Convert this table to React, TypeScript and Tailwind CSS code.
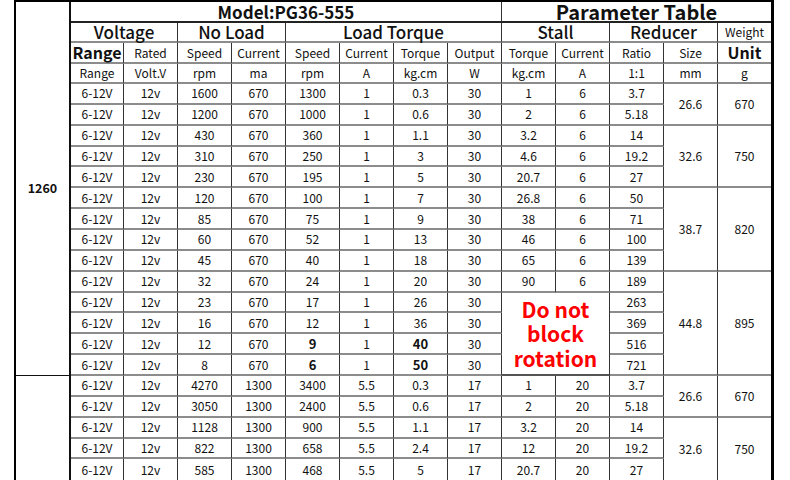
import React from "react";

type CellProps = {
  children?: React.ReactNode;
  className?: string;
  last?: boolean;
  noBottom?: boolean;
};

function Cell({ children, className = "", last = false, noBottom = false }: CellProps) {
  return (
    <div
      className={
        "flex items-center justify-center overflow-visible whitespace-nowrap border-r-[#333] border-b-[#8c8c8c] " +
        (last ? "border-r-0 " : "border-r ") +
        (noBottom ? "border-b-0 " : "border-b-2 ") +
        className
      }
    >
      {children}
    </div>
  );
}

const group1: string[][] = [
  ["1600", "670", "1300", "1", "0.3", "30", "1", "6", "3.7"],
  ["1200", "670", "1000", "1", "0.6", "30", "2", "6", "5.18"],
  ["430", "670", "360", "1", "1.1", "30", "3.2", "6", "14"],
  ["310", "670", "250", "1", "3", "30", "4.6", "6", "19.2"],
  ["230", "670", "195", "1", "5", "30", "20.7", "6", "27"],
  ["120", "670", "100", "1", "7", "30", "26.8", "6", "50"],
  ["85", "670", "75", "1", "9", "30", "38", "6", "71"],
  ["60", "670", "52", "1", "13", "30", "46", "6", "100"],
  ["45", "670", "40", "1", "18", "30", "65", "6", "139"],
  ["32", "670", "24", "1", "20", "30", "90", "6", "189"],
  ["23", "670", "17", "1", "26", "30", "", "", "263"],
  ["16", "670", "12", "1", "36", "30", "", "", "369"],
  ["12", "670", "9", "1", "40", "30", "", "", "516"],
  ["8", "670", "6", "1", "50", "30", "", "", "721"],
];

const group2: string[][] = [
  ["4270", "1300", "3400", "5.5", "0.3", "17", "1", "20", "3.7"],
  ["3050", "1300", "2400", "5.5", "0.6", "17", "2", "20", "5.18"],
  ["1128", "1300", "900", "5.5", "1.1", "17", "3.2", "20", "14"],
  ["822", "1300", "658", "5.5", "2.4", "17", "12", "20", "19.2"],
  ["585", "1300", "468", "5.5", "5", "17", "20.7", "20", "27"],
];

export default function App() {
  const cells: React.ReactNode[] = [];
  let k = 0;
  const key = () => "c" + k++;

  // Header row 1
  cells.push(
    <div
      key={key()}
      className="row-span-18 flex items-center justify-center border-r-2 border-b border-r-[#111] border-b-[#111] text-[12.5px] font-bold"
    >
      1260
    </div>
  );
  cells.push(
    <Cell key={key()} className="col-span-8 text-[17px] font-bold leading-[19px] border-b-[#222]">
      Model:PG36-555
    </Cell>
  );
  cells.push(
    <Cell key={key()} last className="col-span-5 text-[20px] font-bold leading-[19px] border-b-[#222]">
      Parameter Table
    </Cell>
  );

  // Header row 2
  cells.push(<Cell key={key()} className="col-span-2 text-[17px] font-medium leading-[18px]">Voltage</Cell>);
  cells.push(<Cell key={key()} className="col-span-2 text-[17px] font-medium leading-[18px]">No Load</Cell>);
  cells.push(<Cell key={key()} className="col-span-4 text-[17px] font-medium leading-[18px]">Load Torque</Cell>);
  cells.push(<Cell key={key()} className="col-span-2 text-[17px] font-medium leading-[18px]">Stall</Cell>);
  cells.push(<Cell key={key()} className="col-span-2 text-[17px] font-medium leading-[18px]">Reducer</Cell>);
  cells.push(<Cell key={key()} last className="text-[12px] leading-[18px]">Weight</Cell>);

  // Header row 3
  const h3 = ["Range", "Rated", "Speed", "Current", "Speed", "Current", "Torque", "Output", "Torque", "Current", "Ratio", "Size", "Unit"];
  h3.forEach((t, i) => {
    const big = i === 0 || i === h3.length - 1;
    cells.push(
      <Cell key={key()} last={i === h3.length - 1} className={big ? "text-[16px] font-bold leading-[19px]" : "text-[12px]"}>
        {t}
      </Cell>
    );
  });

  // Header row 4
  const h4 = ["Range", "Volt.V", "rpm", "ma", "rpm", "A", "kg.cm", "W", "kg.cm", "A", "1:1", "mm", "g"];
  h4.forEach((t, i) => {
    cells.push(
      <Cell key={key()} last={i === h4.length - 1} className="text-[12px]">
        {t}
      </Cell>
    );
  });

  // Group 1
  const g1Blocks: Record<number, { span: string; size: string; weight: string }> = {
    0: { span: "row-span-2", size: "26.6", weight: "670" },
    2: { span: "row-span-3", size: "32.6", weight: "750" },
    5: { span: "row-span-4", size: "38.7", weight: "820" },
    9: { span: "row-span-5", size: "44.8", weight: "895" },
  };
  group1.forEach((r, i) => {
    const boldLoad = i >= 12;
    cells.push(<Cell key={key()} className="text-[12px]">6-12V</Cell>);
    cells.push(<Cell key={key()} className="text-[12px]">12v</Cell>);
    cells.push(<Cell key={key()} className="text-[12px]">{r[0]}</Cell>);
    cells.push(<Cell key={key()} className="text-[12px]">{r[1]}</Cell>);
    cells.push(<Cell key={key()} className={boldLoad ? "text-[13px] font-bold" : "text-[12px]"}>{r[2]}</Cell>);
    cells.push(<Cell key={key()} className="text-[12px]">{r[3]}</Cell>);
    cells.push(<Cell key={key()} className={boldLoad ? "text-[13px] font-bold" : "text-[12px]"}>{r[4]}</Cell>);
    cells.push(<Cell key={key()} className="text-[12px]">{r[5]}</Cell>);
    if (i < 10) {
      cells.push(<Cell key={key()} className="text-[12px]">{r[6]}</Cell>);
      cells.push(<Cell key={key()} className="text-[12px]">{r[7]}</Cell>);
    } else if (i === 10) {
      cells.push(
        <Cell key={key()} className="col-span-2 row-span-4 border-b-[#555]">
          <div className="text-center text-[21px] font-bold leading-[24.5px] text-[#ff0000]">
            Do not
            <br />
            block
            <br />
            rotation
          </div>
        </Cell>
      );
    }
    cells.push(<Cell key={key()} className="text-[12px]">{r[8]}</Cell>);
    const b = g1Blocks[i];
    if (b) {
      cells.push(<Cell key={key()} className={b.span + " text-[12px]"}>{b.size}</Cell>);
      cells.push(<Cell key={key()} last className={b.span + " text-[12px]"}>{b.weight}</Cell>);
    }
  });

  // Group 2
  const g2Blocks: Record<number, { span: string; size: string; weight: string; last?: boolean }> = {
    0: { span: "row-span-2", size: "26.6", weight: "670" },
    2: { span: "row-span-3", size: "32.6", weight: "750", last: true },
  };
  group2.forEach((r, i) => {
    const nb = i === group2.length - 1;
    if (i === 0) {
      cells.push(<div key={key()} className="row-span-5 border-r-2 border-r-[#111]" />);
    }
    cells.push(<Cell key={key()} noBottom={nb} className="text-[12px]">6-12V</Cell>);
    cells.push(<Cell key={key()} noBottom={nb} className="text-[12px]">12v</Cell>);
    r.forEach((v) => {
      cells.push(
        <Cell key={key()} noBottom={nb} className="text-[12px]">
          {v}
        </Cell>
      );
    });
    const b = g2Blocks[i];
    if (b) {
      cells.push(<Cell key={key()} noBottom={b.last} className={b.span + " text-[12px]"}>{b.size}</Cell>);
      cells.push(<Cell key={key()} last noBottom={b.last} className={b.span + " text-[12px]"}>{b.weight}</Cell>);
    }
  });

  return (
    <div className="h-[480px] w-[790px] overflow-hidden bg-white font-['Noto_Sans_CJK_SC','Noto_Sans',sans-serif] text-[#111]">
      <div className="ml-[14px] w-[760px] border-t-2 border-l-2 border-r-[3px] border-black">
        <div className="grid grid-cols-[55px_53px_repeat(11,54px)_53px] grid-rows-[21px_20px_21px_20px_repeat(19,20.86px)]">
          {cells}
        </div>
      </div>
    </div>
  );
}
